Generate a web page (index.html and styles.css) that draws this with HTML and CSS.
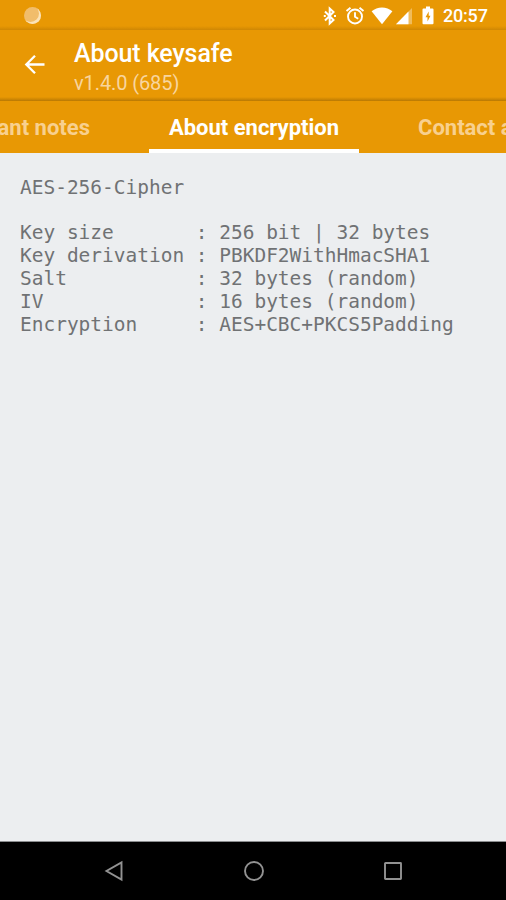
FILE: index.html
```html
<!DOCTYPE html>
<html lang="en">
  <head>
    <meta charset="UTF-8" />
    <meta name="viewport" content="width=device-width, initial-scale=1.0" />
    <title>About keysafe</title>
    <link rel="stylesheet" href="styles.css">
  </head>

  <body>
    <div class="status-bar">
      <span class="notification-dot"></span>
      <div class="status-icons">
        <svg width="14" height="20" viewBox="0 0 14 20" fill="none" stroke="#fff" stroke-width="2">
          <path d="M2 5.500l8.500 8.500-3.800 3.500V2.500l3.800 3.500L2 14.500" />
          <path d="M.8 10h2M11 10h2" />
        </svg>
        <svg class="alarm" width="20" height="20" viewBox="0 0 20 20" fill="none" stroke="#fff" stroke-width="1.900">
          <circle cx="10" cy="10.500" r="7" />
          <path d="M1.500 5l4-3.300M18.500 5l-4-3.300M10 6.200v4.600l3.200 2" />
        </svg>
        <svg class="wifi" width="22" height="20" viewBox="0 0 22 20">
          <path d="M11 18.200L.6 5.300C3.600 3 7 1.600 11 1.600S18.400 3 21.400 5.300z" fill="#fff" />
        </svg>
        <svg class="signal" width="18" height="20" viewBox="0 0 18 20">
          <path d="M17 2v16.200H1z" fill="#fff" fill-opacity="0.35" />
          <path d="M13.500 5.500v12.700H1z" fill="#fff" />
        </svg>
        <svg class="battery" width="12" height="20" viewBox="0 0 12 20">
          <path fill="#fff" fill-rule="evenodd" d="M4 .5h4v2h2.500q1 0 1 1v13.700q0 1-1 1h-9q-1 0-1-1V3.500q0-1 1-1H4zM6.700 5.500L3.500 11.200h2v4.300L8.500 9.800H6.700z" />
        </svg>
      </div>
      <span class="clock">20:57</span>
    </div>

    <div class="toolbar">
      <svg class="back" width="22" height="22" viewBox="0 0 22 22" fill="none" stroke="#fff" stroke-width="2.300">
        <path d="M20.500 11.500H2.500M11 2.800l-8.700 8.700 8.700 8.700" />
      </svg>
      <div>
        <h1>About keysafe</h1>
        <p class="version">v1.4.0 (685)</p>
      </div>
    </div>

    <div class="tabs">
      <div class="tab tab-left"><span>ant notes</span></div>
      <div class="tab tab-active"><span>About encryption</span></div>
      <div class="tab tab-right"><span>Contact a</span></div>
    </div>

    <main>
<pre>
AES-256-Cipher

Key size       : 256 bit | 32 bytes
Key derivation : PBKDF2WithHmacSHA1
Salt           : 32 bytes (random)
IV             : 16 bytes (random)
Encryption     : AES+CBC+PKCS5Padding
</pre>
    </main>

    <div class="nav-bar">
      <svg width="24" height="24" viewBox="0 0 24 24">
        <path d="M19.500 3.500v17L4.500 12z" />
      </svg>
      <svg width="24" height="24" viewBox="0 0 24 24">
        <circle cx="12" cy="12" r="9" />
      </svg>
      <svg width="24" height="24" viewBox="0 0 24 24">
        <rect x="4" y="4" width="16" height="16" rx="0.500" />
      </svg>
    </div>
  </body>
</html>
```
FILE: styles.css
```css
* {
  box-sizing: border-box;
}

body {
  margin: 0;
  height: 900px;
  display: flex;
  flex-direction: column;
  overflow: hidden;
  background-color: #eceef0;
  font-family: Roboto, sans-serif;
  color: #ffffff;
}

.status-bar {
  height: 30px;
  display: flex;
  align-items: center;
  padding: 1px 18px 0 24px;
  background: linear-gradient(#e89804 26px, #cf8704 30px);
}

.notification-dot {
  width: 17px;
  height: 17px;
  border-radius: 50%;
  background-color: #f1bd6b;
  box-shadow: inset -2px -2px 0 #fbe3b8;
}

.status-icons {
  display: flex;
  margin-left: auto;
  margin-right: 9px;
}

.alarm {
  margin-left: 8px;
}

.wifi {
  margin-left: 6px;
}

.signal {
  margin-left: 2px;
}

.battery {
  margin-left: 9px;
}

.clock {
  width: 45px;
  font-size: 18px;
  font-weight: 500;
  letter-spacing: -0.2px;
  white-space: nowrap;
}

.toolbar {
  height: 71px;
  display: flex;
  align-items: flex-start;
  padding: 8px 0 0 24px;
  background: linear-gradient(#e89804 67px, #b97904 71px);
}

.back {
  margin: 15px 28px 0 0;
}

h1 {
  margin: 0;
  font-size: 25px;
  font-weight: 500;
  line-height: 31px;
  letter-spacing: -0.1px;
}

.version {
  margin: 0;
  font-size: 20px;
  line-height: 28px;
  letter-spacing: -0.1px;
  color: #f8d59e;
}

.tabs {
  height: 52px;
  display: flex;
  background-color: #e89804;
  font-size: 22px;
  font-weight: 700;
  line-height: 53px;
  white-space: nowrap;
}

.tab {
  color: #f8d08f;
}

.tab-left {
  width: 149px;
  display: flex;
  justify-content: flex-end;
  padding-right: 59px;
}

.tab-active {
  width: 210px;
  text-align: center;
  color: #ffffff;
  border-bottom: 4px solid #ffffff;
}

.tab-right {
  width: 147px;
  padding-left: 59px;
  overflow: hidden;
}

main {
  flex: 1;
  padding: 23.500px 20px 0;
}

pre {
  margin: 0;
  font-family: "DejaVu Sans Mono", monospace;
  font-size: 19.480px;
  line-height: 22.900px;
  color: #707274;
}

.nav-bar {
  height: 59px;
  display: flex;
  justify-content: space-between;
  padding: 17px 101px 0 102px;
  background-color: #000000;
  border-top: 1px solid #8b8d8f;
}

.nav-bar svg {
  fill: none;
  stroke: #929292;
  stroke-width: 1.900;
}
```
